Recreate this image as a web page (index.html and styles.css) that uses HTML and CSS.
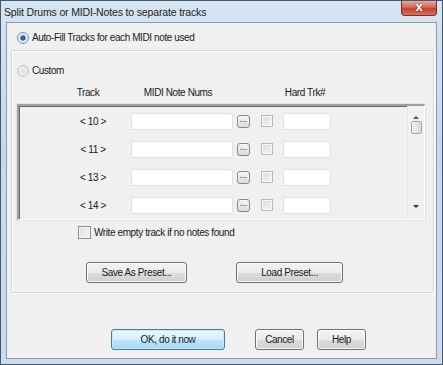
FILE: index.html
```html
<!DOCTYPE html>
<html lang="en">
<head>
    <meta charset="UTF-8">
    <title>Split Drums or MIDI-Notes to separate tracks</title>
    <link rel="stylesheet" href="styles.css">
</head>
<body>
    <div class="window">
        <div class="titlebar">
            <span class="title">Split Drums or MIDI-Notes to separate tracks</span>
            <span class="close-btn">x</span>
        </div>

        <div class="client">
            <label class="radio-row autofill">
                <span class="radio checked"></span>
                <span>Auto-Fill Tracks for each MIDI note used</span>
            </label>

            <div class="group">
                <label class="radio-row custom">
                    <span class="radio"></span>
                    <span>Custom</span>
                </label>

                <div class="col-heads">
                    <span class="head-track">Track</span>
                    <span class="head-notes">MIDI Note Nums</span>
                    <span class="head-hard">Hard Trk#</span>
                </div>

                <div class="listbox">
                    <div class="rows">
                        <div class="row">
                            <span class="track">&lt; 10 &gt;</span>
                            <span class="field notes"></span>
                            <span class="dots">...</span>
                            <span class="check"></span>
                            <span class="field hard"></span>
                        </div>
                        <div class="row">
                            <span class="track">&lt; 11 &gt;</span>
                            <span class="field notes"></span>
                            <span class="dots">...</span>
                            <span class="check"></span>
                            <span class="field hard"></span>
                        </div>
                        <div class="row">
                            <span class="track">&lt; 13 &gt;</span>
                            <span class="field notes"></span>
                            <span class="dots">...</span>
                            <span class="check"></span>
                            <span class="field hard"></span>
                        </div>
                        <div class="row">
                            <span class="track">&lt; 14 &gt;</span>
                            <span class="field notes"></span>
                            <span class="dots">...</span>
                            <span class="check"></span>
                            <span class="field hard"></span>
                        </div>
                    </div>
                    <div class="scrollbar">
                        <span class="arrow up"></span>
                        <span class="thumb"></span>
                        <span class="track-fill"></span>
                        <span class="arrow down"></span>
                    </div>
                </div>

                <label class="check-row">
                    <span class="checkbox"></span>
                    <span>Write empty track if no notes found</span>
                </label>

                <div class="preset-row">
                    <button class="btn save">Save As Preset...</button>
                    <button class="btn load">Load Preset...</button>
                </div>
            </div>

            <div class="footer">
                <button class="btn default ok">OK, do it now</button>
                <button class="btn small">Cancel</button>
                <button class="btn small">Help</button>
            </div>
        </div>
    </div>
</body>
</html>
```

FILE: styles.css
```css
* {
    margin: 0;
    padding: 0;
    box-sizing: border-box;
}

body {
    font-family: 'Liberation Sans', Arial, sans-serif;
    font-size: 10px;
    letter-spacing: -0.4px;
    color: #1a1a1a;
    background: #fff;
}

.window {
    width: 443px;
    height: 365px;
    border: 1px solid #44586e;
    background: linear-gradient(180deg, #d6e4f2 0%, #c6d8eb 40%, #cddcec 100%);
    display: flex;
    flex-direction: column;
}

/* title bar */
.titlebar {
    height: 21px;
    display: flex;
    justify-content: space-between;
    align-items: flex-start;
    padding-left: 3px;
}

.title {
    font-size: 10.5px;
    letter-spacing: -0.15px;
    color: #1e1e1e;
    line-height: 16px;
    margin-top: 3px;
}

.close-btn {
    width: 36px;
    height: 15px;
    margin-right: 5px;
    border: 1px solid #7a2f2a;
    border-top: none;
    border-radius: 0 0 4px 4px;
    background: linear-gradient(180deg, #e7a89d 0%, #d5675a 45%, #c2402f 55%, #d8705c 100%);
    color: #fff;
    font-weight: bold;
    font-size: 13px;
    letter-spacing: 0;
    line-height: 12px;
    text-align: center;
    text-shadow: 0 0 2px #5a1a12;
}

/* client area */
.client {
    flex: 1;
    margin: 0 5px 5px 5px;
    border: 1px solid #8a9cb0;
    background: #f0f0f0;
    display: flex;
    flex-direction: column;
}

.radio-row {
    display: flex;
    align-items: center;
    gap: 3px;
    height: 13px;
}

.autofill {
    margin: 8px 0 0 10px;
}

.radio {
    width: 12px;
    height: 12px;
    border-radius: 50%;
    border: 1px solid #8e8f8f;
    background: radial-gradient(circle, #e6e6e6 0%, #f6f6f6 100%);
    display: inline-block;
}

.radio.checked {
    border-color: #7c8ea0;
    background: radial-gradient(circle, #2f6fb8 0%, #2a5e9e 30%, #dfe8f1 45%, #f4f4f4 100%);
}

.custom .radio {
    border-color: #c2c2c2;
    background: radial-gradient(circle, #e0e0e0 0%, #f3f3f3 100%);
}

/* group box */
.group {
    margin: 6px 2px 0 4px;
    height: 243px;
    border: 1px solid #d9d9d9;
    box-shadow: inset 1px 1px 0 #fff, 1px 1px 0 #fff;
    padding: 13px 0 0 5px;
}

.col-heads {
    display: flex;
    height: 13px;
    margin-top: 10px;
    text-align: center;
}

.head-track {
    width: 80px;
    margin-left: 31px;
}

.head-notes { width: 100px; }
.head-hard { width: 154px; }

/* scrolling list */
.listbox {
    margin-top: 4px;
    width: 408px;
    height: 116px;
    border-top: 2px solid #a0a0a0;
    border-left: 2px solid #a0a0a0;
    border-right: 1px solid #fff;
    border-bottom: 1px solid #fff;
    box-shadow: inset 1px 1px 0 #696969, 0 0 0 1px #e3e3e3;
    display: flex;
    overflow: hidden;
}

.rows {
    flex: 1;
    padding-top: 1px;
}

.row {
    height: 28px;
    display: flex;
    align-items: center;
}

.track {
    width: 112px;
    padding-left: 36px;
    text-align: center;
}

.field {
    height: 17px;
    background: #fff;
    border: 1px solid #e2e2e2;
    border-radius: 2px;
}

.notes {
    width: 102px;
    margin-right: 4px;
}

.dots {
    width: 13px;
    height: 13px;
    border: 1px solid #8a8a8a;
    border-radius: 3px;
    background: linear-gradient(180deg, #f5f5f5, #dcdcdc);
    font-size: 9px;
    letter-spacing: 0;
    line-height: 7px;
    text-align: center;
    color: #333;
    margin-right: 11px;
}

.check {
    width: 12px;
    height: 12px;
    border: 1px solid #b9b9b9;
    background: linear-gradient(135deg, #dcdcdc, #f4f4f4);
    box-shadow: inset 0 0 0 1px #f8f8f8;
    margin-right: 10px;
}

.hard {
    width: 48px;
}

.scrollbar {
    width: 17px;
    display: flex;
    flex-direction: column;
    align-items: center;
    background: #f0f0f0;
    border-left: 1px solid #e8e8e8;
    padding-top: 10px;
}

.arrow {
    width: 0;
    height: 0;
    border-left: 3px solid transparent;
    border-right: 3px solid transparent;
}

.arrow.up {
    border-bottom: 3px solid #555;
}

.arrow.down {
    border-top: 3px solid #333;
}

.thumb {
    width: 11px;
    height: 13px;
    margin-top: 2px;
    border: 1px solid #a7a7a7;
    border-radius: 2px;
    background: linear-gradient(90deg, #f1f1f1, #d8d8d8);
}

.track-fill {
    flex: 1;
}

.scrollbar .down {
    margin-bottom: 11px;
}

.check-row {
    display: flex;
    align-items: center;
    gap: 3px;
    margin: 6px 0 0 61px;
    height: 13px;
}

.checkbox {
    width: 13px;
    height: 13px;
    border: 1px solid #8e8f8f;
    background: linear-gradient(135deg, #dedede, #f7f7f7);
    box-shadow: inset 0 0 0 1px #f4f4f4;
}

/* buttons */
.btn {
    font-family: inherit;
    font-size: 10px;
    letter-spacing: -0.4px;
    color: #1a1a1a;
    height: 21px;
    border: 1px solid #707070;
    border-radius: 3px;
    background: linear-gradient(180deg, #f2f2f2 0%, #ebebeb 50%, #dddddd 51%, #cfcfcf 100%);
    box-shadow: inset 0 0 0 1px #fbfbfb;
}

.preset-row {
    display: flex;
    gap: 49px;
    margin: 23px 0 0 69px;
}

.save { width: 101px; }
.load { width: 107px; }

.footer {
    display: flex;
    gap: 13px;
    margin: 36px 0 0 104px;
}

.ok {
    width: 114px;
    margin-right: 17px;
}

.btn.default {
    border-color: #3c7fb1;
    background: linear-gradient(180deg, #eaf6fd 0%, #d9f0fc 50%, #bee6fd 51%, #a7d9f5 100%);
    box-shadow: inset 0 0 0 1px #c7e6f8;
}

.small { width: 49px; }
```
